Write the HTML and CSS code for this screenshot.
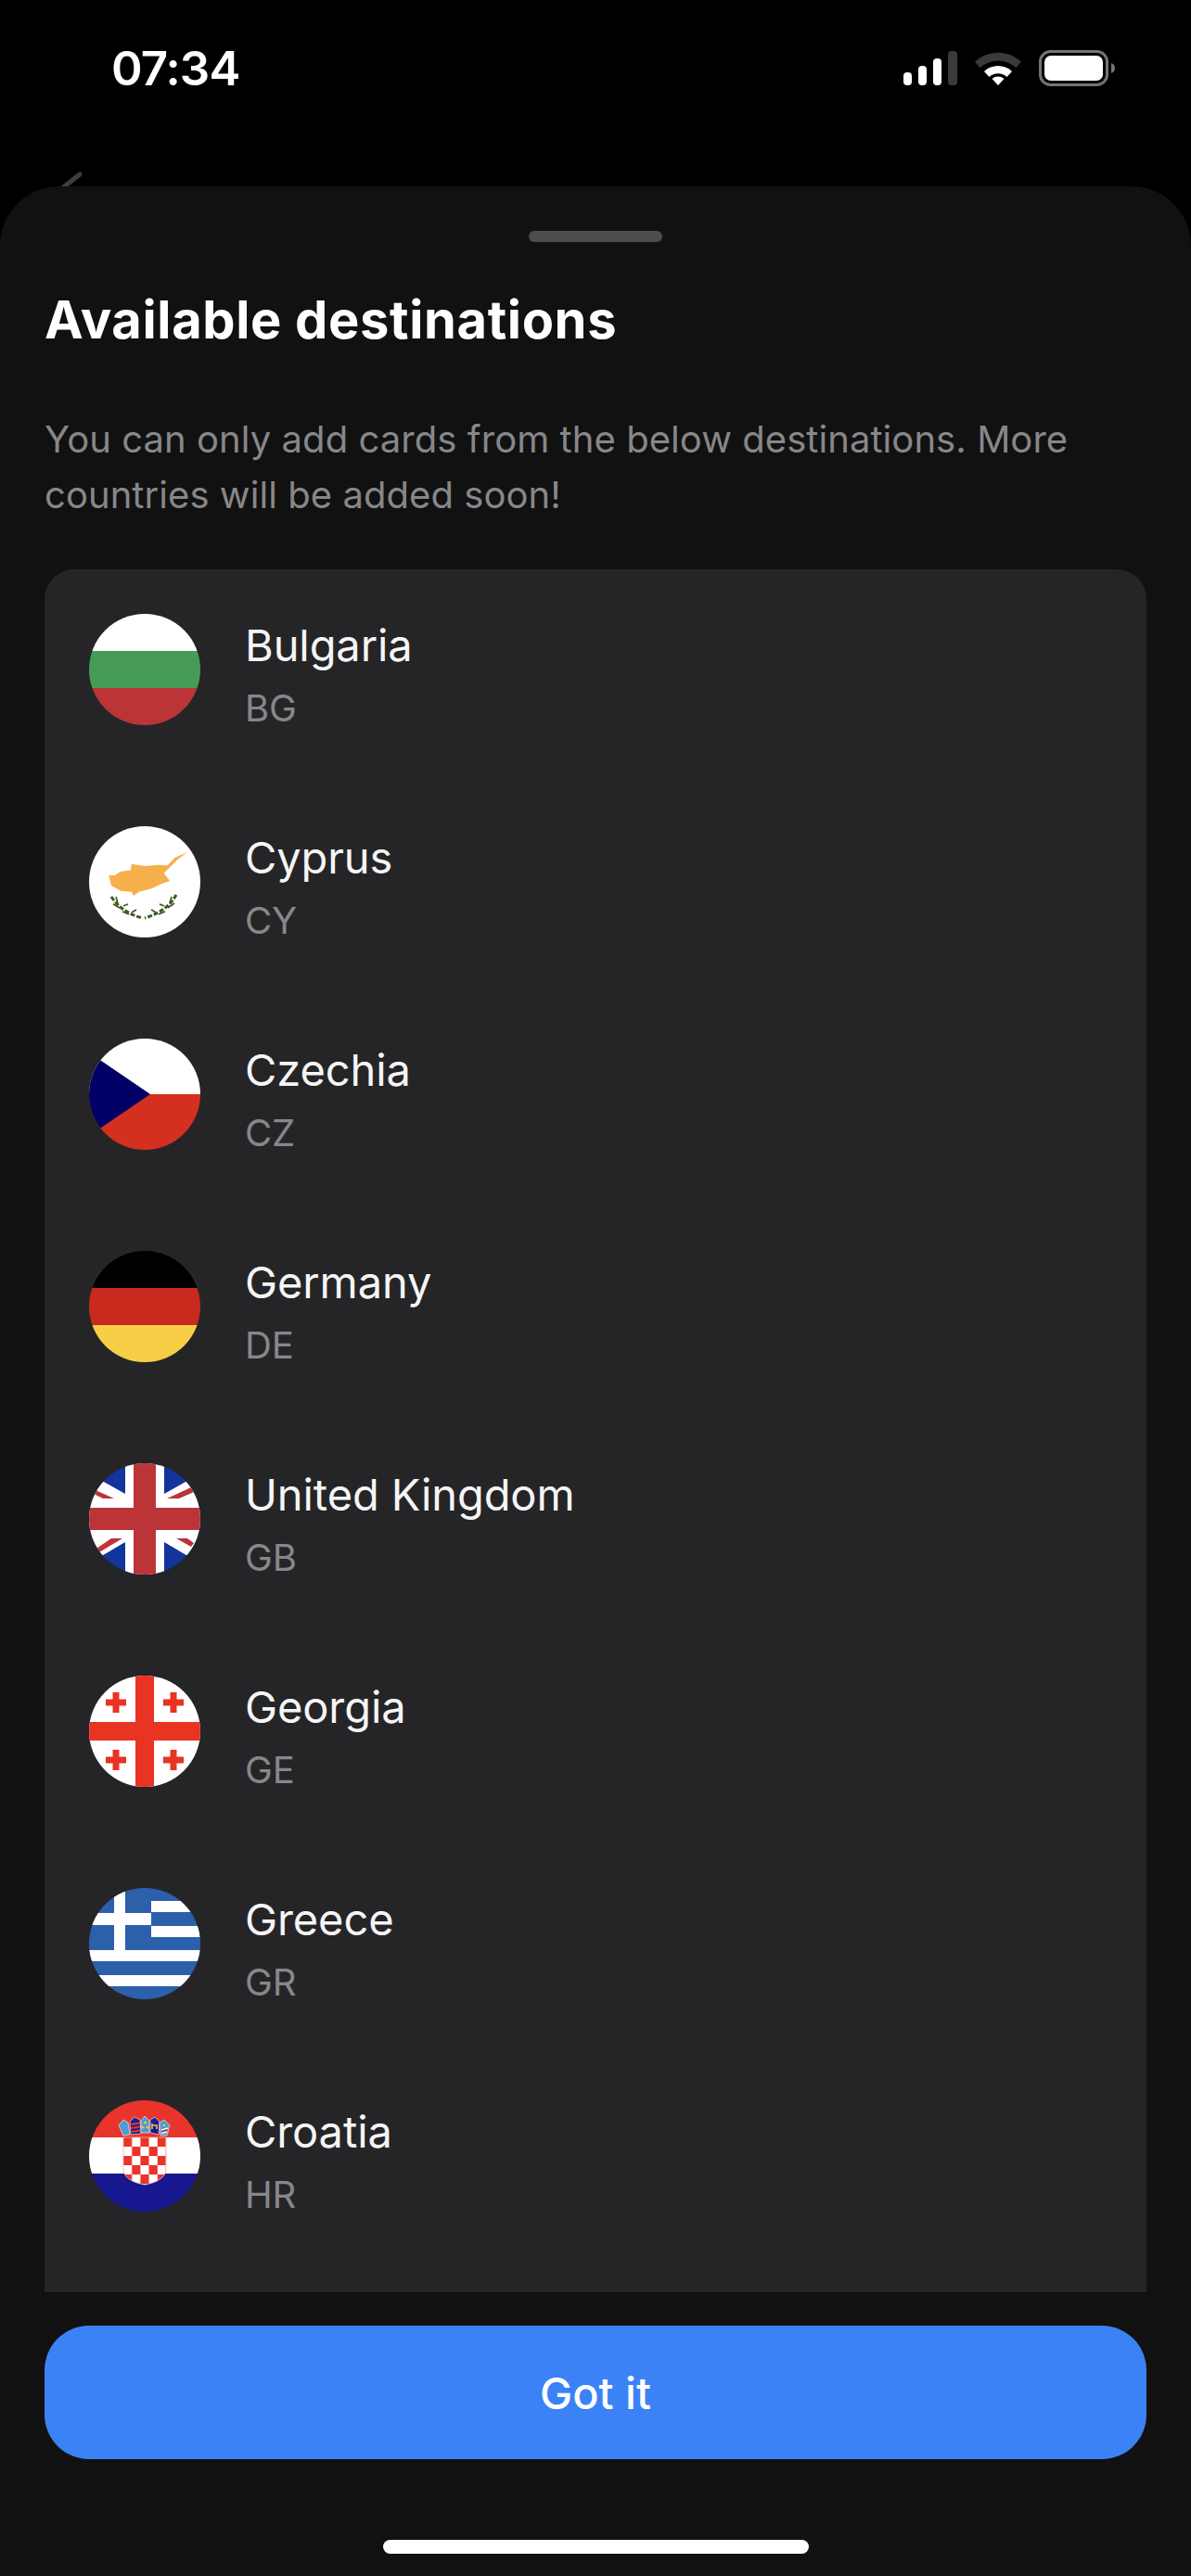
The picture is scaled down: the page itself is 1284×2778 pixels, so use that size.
FILE: index.html
```html
<!doctype html>
<html>
    <head>
        <title>Available destinations</title>
        <link rel="stylesheet" href="styles.css">
    </head>
    <body>
        <div class="screen">
            <div class="top">
                <div class="status">
                    <span class="time">07:34</span>
                    <div class="status-icons">
                        <svg class="signal" width="58" height="37" viewBox="0 0 58 37">
                            <rect x="0" y="23" width="9" height="14" rx="4" fill="#fff"/>
                            <rect x="16" y="16" width="9" height="21" rx="4" fill="#fff"/>
                            <rect x="32" y="8" width="9" height="29" rx="4" fill="#fff"/>
                            <rect x="48" y="0" width="10" height="37" rx="4" fill="#3a3a3a"/>
                        </svg>
                        <svg class="wifi" width="50" height="37" viewBox="0 0 50 37">
                            <path d="M0 11.5 A37 37 0 0 1 50 11.5 L44.5 18 A29 29 0 0 0 5.5 18 Z" fill="#3a3a3a"/>
                            <path d="M10 22 A22 22 0 0 1 40 22 L34.5 28 A14 14 0 0 0 15.5 28 Z" fill="#fff"/>
                            <path d="M18.5 30 A10 10 0 0 1 31.5 30 L25 37 Z" fill="#fff"/>
                        </svg>
                        <svg class="battery" width="82" height="39" viewBox="0 0 82 39">
                            <rect x="1.5" y="1.5" width="72" height="36" rx="11" fill="none" stroke="#757575" stroke-width="3"/>
                            <rect x="6" y="6" width="63" height="27" rx="7" fill="#fff"/>
                            <path d="M78 14 C81 15 82 17 82 19.5 C82 22 81 24 78 25 Z" fill="#757575"/>
                        </svg>
                    </div>
                </div>
                <svg class="back" width="24" height="20" viewBox="0 0 24 20">
                    <path d="M20 4 L1 19" fill="none" stroke="#3d3d3d" stroke-width="5" stroke-linecap="round"/>
                </svg>
            </div>

            <div class="sheet">
                <div class="handle"></div>
                <h1>Available destinations</h1>
                <p class="lead">You can only add cards from the below destinations. More countries will be added soon!</p>

                <div class="list">
                    <div class="row">
                        <svg class="flag" viewBox="0 0 120 120">
                            <rect width="120" height="40" fill="#fff"/>
                            <rect y="40" width="120" height="40" fill="#469c57"/>
                            <rect y="80" width="120" height="40" fill="#bb3537"/>
                        </svg>
                        <div class="country"><span class="name">Bulgaria</span><span class="code">BG</span></div>
                    </div>
                    <div class="row">
                        <svg class="flag" viewBox="0 0 120 120">
                            <rect width="120" height="120" fill="#fff"/>
                            <path d="M105.7 28.3 L92.3 34 L84.7 42.3 L74 41.7 L60.7 43 L45.7 40.7 L45 47.3 L34 49 L27.3 53 L21.3 53 L24 64 L34 69.7 L45.7 70.7 L48 75 L54 70.7 L67.3 67.3 L79 61.7 L87.3 59 L80.7 50.7 L87.3 44 L95.7 35.7 Z" fill="#f5b04c"/>
                            <path d="M24 76 Q36 94 58 99 M94 74 Q84 92 60 99" fill="none" stroke="#3f5a1e" stroke-width="3" stroke-dasharray="5 2"/>
                            <path d="M29 76 L31 83 M37 86 L42 84 M46 93 L51 90 M26 84 L33 88 M36 92 L43 95 M89 76 L87 83 M81 86 L76 84 M72 93 L67 90 M92 83 L85 88 M82 92 L75 95" fill="none" stroke="#3f5a1e" stroke-width="1.6"/>
                        </svg>
                        <div class="country"><span class="name">Cyprus</span><span class="code">CY</span></div>
                    </div>
                    <div class="row">
                        <svg class="flag" viewBox="0 0 120 120">
                            <rect width="120" height="60" fill="#fff"/>
                            <rect y="60" width="120" height="60" fill="#d5301f"/>
                            <path d="M0 15 L66 60 L0 105 Z" fill="#000066"/>
                        </svg>
                        <div class="country"><span class="name">Czechia</span><span class="code">CZ</span></div>
                    </div>
                    <div class="row">
                        <svg class="flag" viewBox="0 0 120 120">
                            <rect width="120" height="40" fill="#000"/>
                            <rect y="40" width="120" height="40" fill="#c92a1e"/>
                            <rect y="80" width="120" height="40" fill="#f7cf46"/>
                        </svg>
                        <div class="country"><span class="name">Germany</span><span class="code">DE</span></div>
                    </div>
                    <div class="row">
                        <svg class="flag" viewBox="0 0 120 120">
                            <rect width="120" height="120" fill="#13349a"/>
                            <path d="M0 11 L39 33 L39 40 L0 40 Z M120 11 L81 33 L81 40 L120 40 Z M0 80 L39 80 L39 85 L0 108 Z M120 80 L81 80 L81 85 L120 108 Z" fill="#fff"/>
                            <path d="M7 29 L27 38 L15 38 L3 32 Z M110 26 L84 38 L97 38 L113 31 Z M8 92 L24 81 L36 81 L11 96 Z M94 81 L106 81 L113 86 L110 90 Z" fill="#bc3438"/>
                            <rect x="39" width="42" height="120" fill="#fff"/>
                            <rect y="38" width="120" height="43" fill="#fff"/>
                            <rect x="48" width="24" height="120" fill="#bc3438"/>
                            <rect y="48" width="120" height="24" fill="#bc3438"/>
                        </svg>
                        <div class="country"><span class="name">United Kingdom</span><span class="code">GB</span></div>
                    </div>
                    <div class="row">
                        <svg class="flag" viewBox="0 0 120 120">
                            <rect width="120" height="120" fill="#fff"/>
                            <g fill="#e93323">
                                <rect x="50" width="20" height="120"/>
                                <rect y="50" width="120" height="20"/>
                                <path d="M25.5 18 H32.5 V25.5 H40 V32.5 H32.5 V40 H25.5 V32.5 H18 V25.5 H25.5 Z"/>
                                <path d="M87.5 18 H94.5 V25.5 H102 V32.5 H94.5 V40 H87.5 V32.5 H80 V25.5 H87.5 Z"/>
                                <path d="M25.5 80 H32.5 V87.5 H40 V94.5 H32.5 V102 H25.5 V94.5 H18 V87.5 H25.5 Z"/>
                                <path d="M87.5 80 H94.5 V87.5 H102 V94.5 H94.5 V102 H87.5 V94.5 H80 V87.5 H87.5 Z"/>
                            </g>
                        </svg>
                        <div class="country"><span class="name">Georgia</span><span class="code">GE</span></div>
                    </div>
                    <div class="row">
                        <svg class="flag" viewBox="0 0 120 120">
                            <rect width="120" height="120" fill="#2d60ab"/>
                            <g fill="#fff">
                                <rect x="67" y="14" width="53" height="12"/>
                                <rect x="67" y="41" width="53" height="12"/>
                                <rect y="67" width="120" height="12"/>
                                <rect y="94" width="120" height="12"/>
                                <rect x="27" width="12" height="67"/>
                                <rect y="27" width="67" height="13"/>
                            </g>
                        </svg>
                        <div class="country"><span class="name">Greece</span><span class="code">GR</span></div>
                    </div>
                    <div class="row">
                        <svg class="flag" viewBox="0 0 120 120">
                            <defs>
                                <pattern id="hr-check" x="37" y="40" width="18.4" height="20" patternUnits="userSpaceOnUse">
                                    <rect width="18.4" height="20" fill="#fff"/>
                                    <rect width="9.2" height="10" fill="#e8342a"/>
                                    <rect x="9.2" y="10" width="9.2" height="10" fill="#e8342a"/>
                                </pattern>
                            </defs>
                            <rect width="120" height="40" fill="#e8342a"/>
                            <rect y="40" width="120" height="39" fill="#fff"/>
                            <rect y="79" width="120" height="41" fill="#17178f"/>
                            <path d="M37 40 H83 V74 C83 84 72 89 60 91 C48 89 37 84 37 74 Z" fill="url(#hr-check)" stroke="#f4b5b0" stroke-width="0.8"/>
                            <g stroke="#fff" stroke-width="0.6">
                                <path d="M32 27 L37 21 L42 24 L44 37 L37 38 Z" fill="#4b9bd6"/>
                                <path d="M44 23 L49 18 L55 21 L56 36 L45 37 Z" fill="#1c1f8f"/>
                                <path d="M56 22 L60 17 L65 22 L65 35 L56 35 Z" fill="#4b9bd6"/>
                                <path d="M66 21 L71 18 L76 23 L75 37 L66 35 Z" fill="#1c1f8f"/>
                                <path d="M76 24 L81 21 L87 27 L84 38 L77 38 Z" fill="#4b9bd6"/>
                            </g>
                            <path d="M45 26 L55 24.5 M45 30 L55 28.5 M45.5 34 L55.5 32.5" stroke="#e8342a" stroke-width="2"/>
                            <circle cx="60.5" cy="24" r="1.6" fill="#e9c43a"/>
                            <circle cx="58" cy="29" r="1.6" fill="#e9c43a"/>
                            <circle cx="63" cy="29" r="1.6" fill="#e9c43a"/>
                            <path d="M68 25 V31 M68 27 H73 V31" fill="none" stroke="#e9c43a" stroke-width="1.6"/>
                            <circle cx="81" cy="27" r="1.4" fill="#e9c43a"/>
                            <path d="M78 32 L85 30 M78 35.5 L84 34" stroke="#fff" stroke-width="1.4"/>
                            <path d="M78 33.8 L84.5 32" stroke="#c3261f" stroke-width="1.4"/>
                        </svg>
                        <div class="country"><span class="name">Croatia</span><span class="code">HR</span></div>
                    </div>
                </div>

                <button class="got-it">Got it</button>
                <div class="home-bar"></div>
            </div>
        </div>
    </body>
</html>
```

FILE: styles.css
```css
body {
    margin: 0;
    background: #000;
    color: #fff;
    font-family: 'Inter', 'Liberation Sans', sans-serif;
}
.screen {
    width: 1284px;
    height: 2778px;
    display: flex;
    flex-direction: column;
    overflow: hidden;
}
.top {
    height: 201px;
    flex: none;
    overflow: hidden;
}
.status {
    height: 54px;
    padding: 46px 82px 0 120px;
    display: flex;
    justify-content: space-between;
    align-items: center;
}
.time {
    font-size: 51px;
    font-weight: 600;
    letter-spacing: -0.9px;
}
.status-icons {
    display: flex;
    align-items: center;
    gap: 19px;
}
.back {
    display: block;
    margin: 84px 0 0 66px;
}
.sheet {
    flex: 1;
    min-height: 0;
    background: #111;
    border-radius: 64px 64px 0 0;
    padding: 0 48px;
    display: flex;
    flex-direction: column;
}
.handle {
    width: 144px;
    height: 12px;
    margin: 48px auto 0;
    border-radius: 6px;
    background: #4d4d4f;
}
h1 {
    margin: 50px 0 0;
    font-size: 56px;
    line-height: 68px;
    font-weight: 700;
    letter-spacing: 0.65px;
}
.lead {
    margin: 65px 0 0;
    font-size: 40px;
    line-height: 60px;
    letter-spacing: 0.06px;
    color: #87878a;
}
.list {
    margin-top: 50px;
    height: 1858px;
    flex: none;
    box-sizing: border-box;
    padding: 48px 48px 0;
    background: #252527;
    border-radius: 32px 32px 0 0;
    overflow: hidden;
    display: flex;
    flex-direction: column;
    gap: 109px;
}
.row {
    height: 120px;
    display: flex;
    align-items: flex-start;
    gap: 48px;
    flex: none;
}
.flag {
    width: 120px;
    height: 120px;
    border-radius: 50%;
    flex: none;
}
.country {
    display: flex;
    flex-direction: column;
    gap: 14px;
    padding-top: 5px;
}
.name {
    font-size: 47px;
    line-height: 58px;
    letter-spacing: -0.1px;
    color: #f5f5f5;
}
.code {
    font-size: 40px;
    line-height: 50px;
    letter-spacing: -0.2px;
    color: #87878a;
}
.got-it {
    margin-top: 36px;
    height: 144px;
    flex: none;
    border: 0;
    border-radius: 48px;
    background: #3b82f6;
    color: #fff;
    font-family: inherit;
    font-size: 47px;
    font-weight: 500;
}
.home-bar {
    width: 459px;
    height: 15px;
    margin: 87px auto 0;
    border-radius: 8px;
    background: #fff;
}
```
